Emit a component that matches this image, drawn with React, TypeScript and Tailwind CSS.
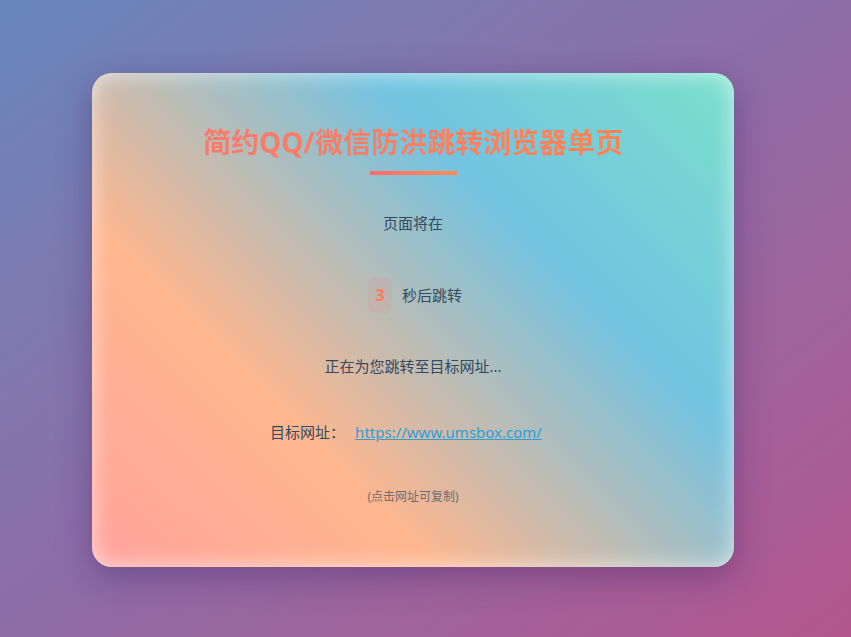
import React from "react";

const font = { fontFamily: '"Noto Sans", "Noto Sans CJK SC", sans-serif' };

export default function App() {
  return (
    <div
      className="flex h-[637px] w-full items-start overflow-hidden bg-linear-to-br from-[#6687bc] via-[#8e6ca6] to-[#b3558e] pt-[73px] pl-[92px]"
      style={font}
    >
      <div className="flex h-[494px] w-[642px] flex-col items-center rounded-[20px] bg-[linear-gradient(45deg,#ffa29d_0%,#ffb68e_30%,#72c3e1_68%,#7be0cb_100%)] pt-12 shadow-[inset_0_0_22px_rgba(255,255,255,0.65),0_10px_34px_rgba(60,30,100,0.4)]">
        <h1 className="bg-linear-to-r from-[#f77a6c] to-[#ff8454] bg-clip-text text-[28px] leading-[42px] font-bold text-transparent">
          简约QQ/微信防洪跳转浏览器单页
        </h1>
        <div className="mt-2 h-1 w-[87px] bg-linear-to-r from-[#ff6b6b] to-[#ff8e53]" />
        <p className="mt-[38px] text-[15px] leading-[21px] text-[#34495e]">页面将在</p>
        <div className="mt-[43px] flex items-center pl-1">
          <span className="flex h-9 w-6 items-center justify-center rounded-md bg-[rgba(220,150,150,0.22)] text-[16px] font-bold text-[#ff7a5a]">
            3
          </span>
          <span className="ml-[10px] text-[15px] leading-[21px] text-[#34495e]">秒后跳转</span>
        </div>
        <p className="mt-[43px] text-[15px] leading-[21px] text-[#34495e]">正在为您跳转至目标网址...</p>
        <p className="mt-[45px] flex items-center pr-1 text-[15px] leading-[21px] text-[#34495e]">
          <span>目标网址：</span>
          <a href="#" className="mr-[10px] ml-[10px] text-[#2aa0d6] underline">
            https://www.umsbox.com/
          </a>
        </p>
        <p className="mt-[45px] text-[12px] leading-[18px] text-[#6e6e6e]">(点击网址可复制)</p>
      </div>
    </div>
  );
}
